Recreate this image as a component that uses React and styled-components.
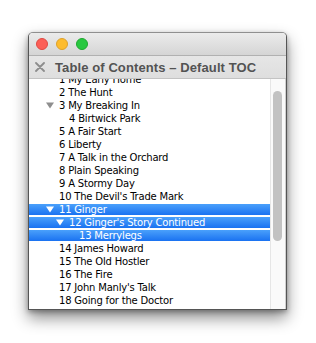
import React from "react";
import styled, { createGlobalStyle } from "styled-components";

const GlobalStyle = createGlobalStyle`
  html, body { margin: 0; padding: 0; background: #ffffff; }
  body { font-family: "DejaVu Sans", "Liberation Sans", sans-serif; }
`;

const Stage = styled.div`
  width: 316px;
  height: 343px;
  padding: 32px 0 0 28px;
  box-sizing: border-box;
  overflow: hidden;
`;

const Window = styled.div`
  width: 259px;
  height: 278px;
  box-sizing: border-box;
  border: 1px solid #555555;
  border-top-color: #8f8f8f;
  border-radius: 5px 5px 0 0;
  background: #ffffff;
  box-shadow: 0 8px 16px rgba(0, 0, 0, 0.45), 0 2px 5px rgba(0, 0, 0, 0.3);
  display: flex;
  flex-direction: column;
  overflow: hidden;
`;

const TitleBar = styled.div`
  height: 22px;
  flex: none;
  display: flex;
  align-items: center;
  gap: 8px;
  padding-left: 7px;
  background: linear-gradient(#ebebeb, #d5d5d5);
  border-bottom: 1px solid #b1b1b1;
`;

const Light = styled.span`
  width: 12px;
  height: 12px;
  border-radius: 50%;
  box-sizing: border-box;
  background: ${(p) => p.$fill};
  border: 1px solid ${(p) => p.$edge};
`;

const Header = styled.div`
  height: 22px;
  flex: none;
  display: flex;
  align-items: center;
  gap: 10px;
  padding-left: 6px;
  background: linear-gradient(#e6e6e6, #dedede);
  border-bottom: 1px solid #c3c3c3;
`;

const Title = styled.span`
  font-family: "Liberation Sans", Arial, sans-serif;
  font-weight: bold;
  font-size: 13px;
  letter-spacing: 0.1px;
  color: #535353;
  white-space: nowrap;
`;

const Body = styled.div`
  flex: 1;
  display: flex;
  min-height: 0;
`;

const Viewport = styled.div`
  flex: 1;
  overflow: hidden;
  min-width: 0;
`;

const List = styled.div`
  margin-top: -6px;
`;

const Row = styled.div`
  height: 13px;
  display: flex;
  align-items: center;
  padding-left: ${(p) => 16 + p.$level * 10}px;
  font-size: 10px;
  letter-spacing: -0.2px;
  color: ${(p) => (p.$selected ? "#ffffff" : "#000000")};
  white-space: nowrap;
  background: ${(p) =>
    p.$selected
      ? "linear-gradient(#4aa0fb, #1a72f1) 0 1px / 100% 11px no-repeat"
      : "transparent"};
`;

const Toggle = styled.span`
  width: 14px;
  flex: none;
  display: flex;
  align-items: center;
  padding-left: 1px;
  box-sizing: border-box;
`;

const Label = styled.span`
  line-height: 13px;
`;

const ScrollTrack = styled.div`
  width: 16px;
  flex: none;
  box-sizing: border-box;
  border-left: 1px solid #e6e6e6;
  border-right: 1px solid #d0d0d0;
  background: #fafafa;
  padding: 12px 2px 0 2px;
`;

const Thumb = styled.div`
  width: 9px;
  height: 150px;
  border-radius: 5px;
  background: #c2c2c2;
`;

const Triangle = ({ color }) => (
  <svg width="8" height="7" viewBox="0 0 8 7">
    <path d="M0 0.5 H8 L4 6.5 Z" fill={color} />
  </svg>
);

const CloseX = () => (
  <svg width="10" height="10" viewBox="0 0 10 10">
    <path d="M1 1 L9 9 M9 1 L1 9" stroke="#8d8d8d" strokeWidth="1.8" strokeLinecap="round" />
  </svg>
);

const items = [
  { n: 1, t: "My Early Home", level: 0 },
  { n: 2, t: "The Hunt", level: 0 },
  { n: 3, t: "My Breaking In", level: 0, open: true },
  { n: 4, t: "Birtwick Park", level: 1 },
  { n: 5, t: "A Fair Start", level: 0 },
  { n: 6, t: "Liberty", level: 0 },
  { n: 7, t: "A Talk in the Orchard", level: 0 },
  { n: 8, t: "Plain Speaking", level: 0 },
  { n: 9, t: "A Stormy Day", level: 0 },
  { n: 10, t: "The Devil's Trade Mark", level: 0 },
  { n: 11, t: "Ginger", level: 0, open: true, selected: true },
  { n: 12, t: "Ginger's Story Continued", level: 1, open: true, selected: true },
  { n: 13, t: "Merrylegs", level: 2, selected: true },
  { n: 14, t: "James Howard", level: 0 },
  { n: 15, t: "The Old Hostler", level: 0 },
  { n: 16, t: "The Fire", level: 0 },
  { n: 17, t: "John Manly's Talk", level: 0 },
  { n: 18, t: "Going for the Doctor", level: 0 },
  { n: 19, t: "Only Ignorance", level: 0 },
  { n: 20, t: "Joe Green", level: 0 },
];

export default function App() {
  return (
    <>
      <GlobalStyle />
      <Stage>
        <Window>
          <TitleBar>
            <Light $fill="#fc5f57" $edge="#df4a43" />
            <Light $fill="#fdbc2e" $edge="#dea12a" />
            <Light $fill="#28c840" $edge="#1fa82f" />
          </TitleBar>
          <Header>
            <CloseX />
            <Title>Table of Contents – Default TOC</Title>
          </Header>
          <Body>
            <Viewport>
              <List>
                {items.map((it) => (
                  <Row key={it.n} $level={it.level} $selected={it.selected}>
                    <Toggle>
                      {it.open && <Triangle color={it.selected ? "#ffffff" : "#8e8e8e"} />}
                    </Toggle>
                    <Label>
                      {it.n} {it.t}
                    </Label>
                  </Row>
                ))}
              </List>
            </Viewport>
            <ScrollTrack>
              <Thumb />
            </ScrollTrack>
          </Body>
        </Window>
      </Stage>
    </>
  );
}
